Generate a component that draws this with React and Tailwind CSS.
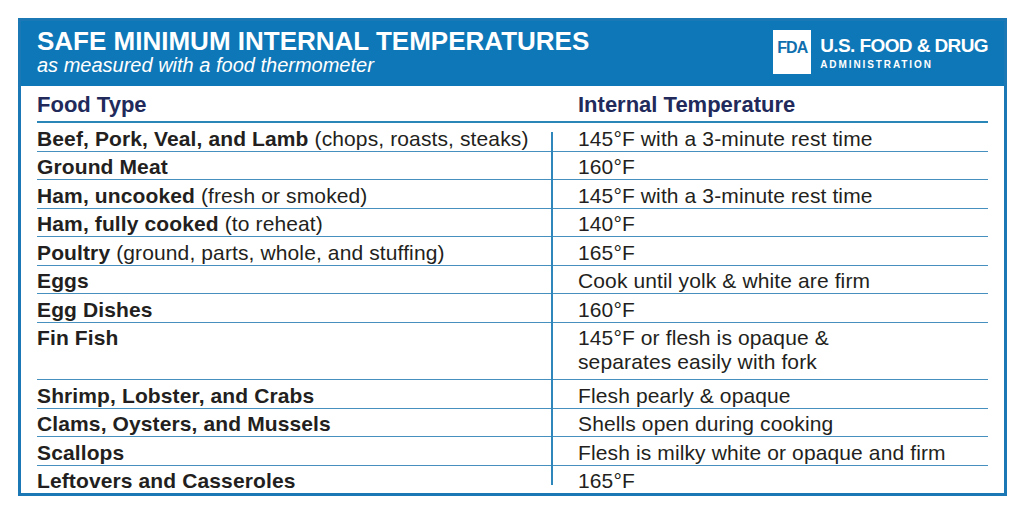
import React from 'react'

const rows = [
  { food: 'Beef, Pork, Veal, and Lamb', note: '(chops, roasts, steaks)', temp: ['145°F with a 3-minute rest time'] },
  { food: 'Ground Meat', temp: ['160°F'] },
  { food: 'Ham, uncooked', note: '(fresh or smoked)', temp: ['145°F with a 3-minute rest time'] },
  { food: 'Ham, fully cooked', note: '(to reheat)', temp: ['140°F'] },
  { food: 'Poultry', note: '(ground, parts, whole, and stuffing)', temp: ['165°F'] },
  { food: 'Eggs', temp: ['Cook until yolk & white are firm'] },
  { food: 'Egg Dishes', temp: ['160°F'] },
  { food: 'Fin Fish', temp: ['145°F or flesh is opaque &', 'separates easily with fork'] },
  { food: 'Shrimp, Lobster, and Crabs', temp: ['Flesh pearly & opaque'] },
  { food: 'Clams, Oysters, and Mussels', temp: ['Shells open during cooking'] },
  { food: 'Scallops', temp: ['Flesh is milky white or opaque and firm'] },
  { food: 'Leftovers and Casseroles', temp: ['165°F'] },
]

function FdaLogo() {
  return (
    <div className="flex items-start gap-[9px] pt-[9px]">
      <div className="w-[38px] h-[44px] bg-white flex justify-center pt-[10px]">
        <span className="text-[16px] leading-[16px] font-bold tracking-[-1px] text-[#0f6fae]">FDA</span>
      </div>
      <div className="flex flex-col pt-[6px] text-white">
        <span className="text-[19px] leading-[19px] font-bold tracking-[-0.6px]">U.S. FOOD &amp; DRUG</span>
        <span className="mt-[5px] text-[10px] leading-[10px] font-bold tracking-[1.9px]">ADMINISTRATION</span>
      </div>
    </div>
  )
}

export default function App() {
  return (
    <div
      className="w-[1024px] h-[512px] bg-white pt-[18px] pl-[18px]"
      style={{ fontFamily: '"Liberation Sans", Arial, sans-serif' }}
    >
      <div className="w-[989px] border-[3px] border-[#1b78b4]">
        {/* Header */}
        <div className="h-[65px] bg-[#0e77b7] px-[16px] flex justify-between">
          <div className="pt-[6px] text-white">
            <h1 className="text-[26px] leading-[28px] font-bold">SAFE MINIMUM INTERNAL TEMPERATURES</h1>
            <p className="text-[20px] leading-[20px] italic">as measured with a food thermometer</p>
          </div>
          <FdaLogo />
        </div>

        {/* Table */}
        <div className="px-[16px] text-[#231f20]">
          <div className="flex pt-[6px] pb-[3px] border-b-[2.5px] border-[#2b86b8] text-[22px] leading-[26px] font-bold text-[#212a5b]">
            <div className="w-[515px]">Food Type</div>
            <div className="pl-[26px]">Internal Temperature</div>
          </div>

          <div className="relative">
            <div className="absolute left-[514px] top-[9px] bottom-[8px] w-[1.5px] bg-[#2f86ba]" />
            {rows.map((row, i) => (
              <div
                key={row.food}
                className={`flex text-[21px] leading-[24px] tracking-[0.12px] pt-[3.5px] ${
                  i === rows.length - 1 ? '' : 'border-b border-[#4590bf]'
                } ${row.temp.length > 1 ? 'pb-[5px]' : ''}`}
              >
                <div className="w-[515px]">
                  <span className="font-bold">{row.food}</span>
                  {row.note && <span> {row.note}</span>}
                </div>
                <div className="pl-[26px]">
                  {row.temp.map((t) => (
                    <div key={t}>{t}</div>
                  ))}
                </div>
              </div>
            ))}
          </div>
        </div>
      </div>
    </div>
  )
}
